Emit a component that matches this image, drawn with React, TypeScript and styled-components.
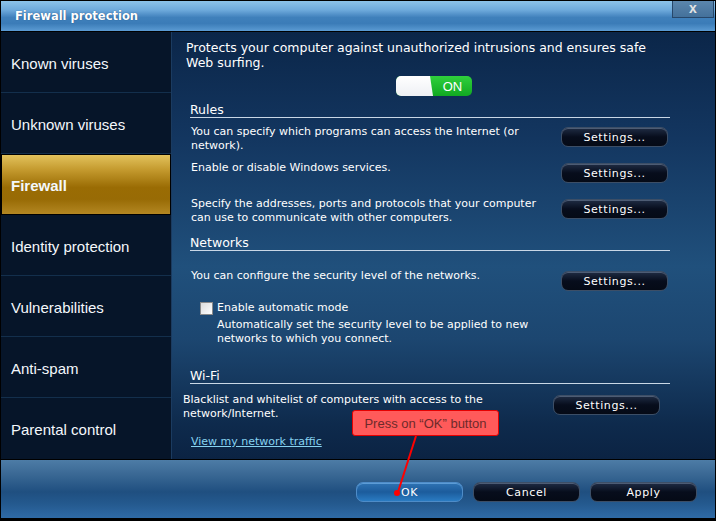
import React from 'react'
import styled, { createGlobalStyle } from 'styled-components'

const GlobalStyle = createGlobalStyle`
  html, body {
    margin: 0;
    padding: 0;
    background: #ffffff;
  }
  * {
    box-sizing: border-box;
  }
`

const Window = styled.div`
  position: relative;
  width: 716px;
  height: 521px;
  border: 1px solid #000;
  display: flex;
  flex-direction: column;
  font-family: "DejaVu Sans", Verdana, sans-serif;
  color: #fff;
  background: #000;
  overflow: hidden;
`

const TitleBar = styled.div`
  height: 31px;
  flex: none;
  display: flex;
  justify-content: space-between;
  align-items: flex-start;
  background: linear-gradient(180deg, #8cc3ea 0%, #6eaadc 30%, #3f80bb 55%, #3b7cb8 75%, #5b9bd3 100%);
  border-bottom: 1px solid #000;
`

const Title = styled.div`
  padding: 8px 0 0 14px;
  font-size: 11.5px;
  font-weight: bold;
  color: #fff;
  text-shadow: 0 0 1px rgba(0, 40, 80, 0.6);
`

const CloseButton = styled.div`
  width: 42px;
  height: 17px;
  margin-right: 1px;
  background: linear-gradient(180deg, #5b86ad, #44719b);
  border: 1px solid #27476a;
  border-top: none;
  display: flex;
  align-items: center;
  justify-content: center;
  color: #e4e4e4;
  font-family: "Liberation Sans", Arial, sans-serif;
  font-size: 14px;
  font-weight: bold;
  line-height: 1;
  padding-bottom: 2px;
`

const Body = styled.div`
  height: 427px;
  flex: none;
  display: flex;
`

const Sidebar = styled.div`
  width: 170px;
  flex: none;
  background: #061529;
  display: flex;
  flex-direction: column;
`

const NavItem = styled.div<{ $active?: boolean }>`
  height: 61px;
  flex: none;
  display: flex;
  align-items: center;
  padding: 2px 0 0 10px;
  font-family: "Liberation Sans", Arial, sans-serif;
  font-size: 15px;
  font-weight: ${p => (p.$active ? 'bold' : 'normal')};
  color: #f4f8fc;
  border-bottom: 1px solid #132f4c;
  ${p =>
    p.$active &&
    `
    padding-left: 9px;
    border: 1px solid #000;
    background: linear-gradient(180deg, #e2c25c 0%, #c49a2e 25%, #9a6c04 55%, #986b05 75%, #b38722 100%);
  `}
  &:last-child {
    border-bottom: none;
  }
`

const Content = styled.div`
  flex: 1;
  display: flex;
  flex-direction: column;
  padding: 8px 0 0 14px;
  border-left: 1px solid #1b3b60;
  background: linear-gradient(180deg, #0b2649 0%, #133660 25%, #20507c 55%, #1c4670 72%, #0e2a4c 92%, #0b2343 100%);
`

const Intro = styled.div`
  font-size: 12.5px;
  line-height: 15px;
  color: #fff;
  width: 478px;
`

const Toggle = styled.div`
  margin: 6px 0 0 210px;
  width: 76px;
  height: 20px;
  display: flex;
  border-radius: 5px;
  overflow: hidden;
  background: linear-gradient(180deg, #2fd03c, #11a922);
`

const ToggleKnob = styled.div`
  width: 37px;
  height: 100%;
  background: linear-gradient(180deg, #ffffff, #eef0f4);
  clip-path: polygon(0 0, 34px 0, 37px 100%, 0 100%);
`

const ToggleLabel = styled.div`
  flex: 1;
  display: flex;
  align-items: center;
  justify-content: center;
  font-family: "Liberation Sans", Arial, sans-serif;
  font-size: 13px;
  color: #fff;
`

const Heading = styled.div<{ $top: number }>`
  margin: ${p => p.$top}px 0 0 4px;
  width: 480px;
  font-size: 12.5px;
  line-height: 14px;
  color: #fff;
  border-bottom: 1px solid #c9d7e6;
`

const Row = styled.div<{ $top: number; $shift?: number }>`
  margin: ${p => p.$top}px 0 0 ${p => 5 - (p.$shift || 0)}px;
  height: 36px;
  display: flex;
  align-items: flex-start;
  justify-content: space-between;
  width: 477px;
`

const RowText = styled.div`
  width: 360px;
  font-size: 11px;
  line-height: 14px;
  color: #fff;
`

const Button = styled.div<{ $primary?: boolean }>`
  width: 107px;
  height: 20px;
  flex: none;
  margin-top: 2px;
  display: flex;
  align-items: center;
  justify-content: center;
  font-size: 11px;
  letter-spacing: 0.6px;
  color: #fff;
  border-radius: 7px;
  border: 1px solid ${p => (p.$primary ? '#4e8cc8' : '#3c4e66')};
  background: ${p =>
    p.$primary
      ? 'linear-gradient(180deg, #2f73b4 0%, #1c5c9c 50%, #2a7bc2 100%)'
      : 'linear-gradient(180deg, #1f2c44 0%, #070d1c 50%, #050a16 100%)'};
  box-shadow: inset 0 1px 0 ${p => (p.$primary ? '#5c9cd6' : '#4d5c74')};
`

const CheckRow = styled.label`
  margin: -4px 0 0 14px;
  display: flex;
  align-items: center;
  gap: 4px;
  font-size: 11px;
  line-height: 14px;
  color: #fff;
`

const CheckBox = styled.span`
  width: 13px;
  height: 13px;
  border: 1px solid #8a8a8a;
  background: linear-gradient(135deg, #dcdcdc, #ffffff);
`

const CheckHelp = styled.div`
  margin: 3px 0 0 31px;
  width: 360px;
  font-size: 11px;
  line-height: 14px;
  color: #fff;
`

const Link = styled.a`
  margin: 6px 0 0 5px;
  font-size: 11px;
  line-height: 14px;
  color: #86d2f0;
  text-decoration: underline;
  align-self: flex-start;
`

const Footer = styled.div`
  height: 59px;
  flex: none;
  border-top: 1px solid #000;
  display: flex;
  justify-content: flex-end;
  align-items: flex-start;
  gap: 10px;
  padding: 20px 18px 0 0;
  background: linear-gradient(180deg, #4d7ca6 0%, #3a6894 25%, #1f4f80 55%, #24598e 75%, #2f6aa5 100%);
`

const Callout = styled.div`
  position: absolute;
  left: 351px;
  top: 409px;
  width: 147px;
  height: 26px;
  border: 1px solid #e60000;
  border-radius: 3px;
  background: #ff5a5a;
  display: flex;
  align-items: center;
  justify-content: center;
  font-family: "Liberation Sans", Arial, sans-serif;
  font-size: 13px;
  color: #6e2a2a;
`

const Pointer = styled.svg`
  position: absolute;
  left: 0;
  top: 0;
  pointer-events: none;
`

const navItems = [
  'Known viruses',
  'Unknown viruses',
  'Firewall',
  'Identity protection',
  'Vulnerabilities',
  'Anti-spam',
  'Parental control',
]

export default function App() {
  return (
    <>
      <GlobalStyle />
      <Window>
        <TitleBar>
          <Title>Firewall protection</Title>
          <CloseButton>x</CloseButton>
        </TitleBar>
        <Body>
          <Sidebar>
            {navItems.map(item => (
              <NavItem key={item} $active={item === 'Firewall'}>
                {item}
              </NavItem>
            ))}
          </Sidebar>
          <Content>
            <Intro>
              Protects your computer against unauthorized intrusions and ensures safe Web surfing.
            </Intro>
            <Toggle>
              <ToggleKnob />
              <ToggleLabel>ON</ToggleLabel>
            </Toggle>
            <Heading $top={7}>Rules</Heading>
            <Row $top={7}>
              <RowText>You can specify which programs can access the Internet (or network).</RowText>
              <Button>Settings...</Button>
            </Row>
            <Row $top={0}>
              <RowText>Enable or disable Windows services.</RowText>
              <Button>Settings...</Button>
            </Row>
            <Row $top={0}>
              <RowText>Specify the addresses, ports and protocols that your computer can use to communicate with other computers.</RowText>
              <Button>Settings...</Button>
            </Row>
            <Heading $top={3}>Networks</Heading>
            <Row $top={18}>
              <RowText>You can configure the security level of the networks.</RowText>
              <Button>Settings...</Button>
            </Row>
            <CheckRow>
              <CheckBox />
              Enable automatic mode
            </CheckRow>
            <CheckHelp>
              Automatically set the security level to be applied to new networks to which you connect.
            </CheckHelp>
            <Heading $top={23}>Wi-Fi</Heading>
            <Row $top={9} $shift={8}>
              <RowText>Blacklist and whitelist of computers with access to the network/Internet.</RowText>
              <Button>Settings...</Button>
            </Row>
            <Link>View my network traffic</Link>
          </Content>
        </Body>
        <Footer>
          <Button $primary>OK</Button>
          <Button>Cancel</Button>
          <Button>Apply</Button>
        </Footer>
        <Callout>Press on “OK” button</Callout>
        <Pointer width="716" height="521" viewBox="0 0 716 521">
          <line x1="415" y1="435" x2="397" y2="491" stroke="#ff0000" strokeWidth="2" />
          <circle cx="396" cy="492" r="3" fill="#ff0000" />
        </Pointer>
      </Window>
    </>
  )
}
